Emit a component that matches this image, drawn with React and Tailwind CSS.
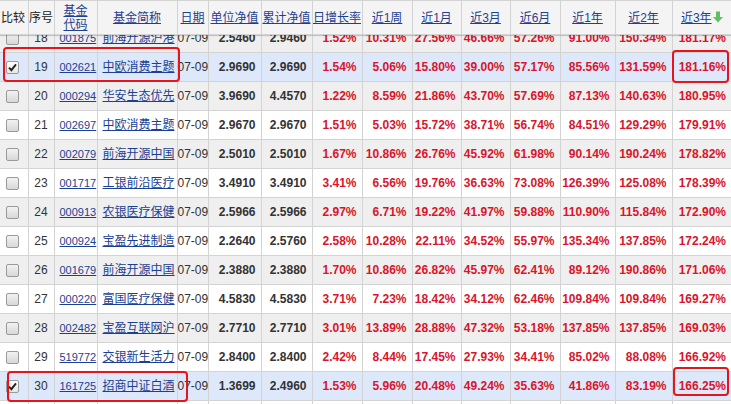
import React from "react";

const rows = [
  ["18", "001875", "前海开源沪港", "2.5460", "2.9460", "1.52%", "10.31%", "27.56%", "46.66%", "57.26%", "91.00%", "150.34%", "181.17%"],
  ["19", "002621", "中欧消费主题", "2.9690", "2.9690", "1.54%", "5.06%", "15.80%", "39.00%", "57.17%", "85.56%", "131.59%", "181.16%"],
  ["20", "000294", "华安生态优先", "3.9690", "4.4570", "1.22%", "8.59%", "21.86%", "43.70%", "57.69%", "87.13%", "140.63%", "180.95%"],
  ["21", "002697", "中欧消费主题", "2.9670", "2.9670", "1.51%", "5.03%", "15.72%", "38.71%", "56.74%", "84.51%", "129.29%", "179.91%"],
  ["22", "002079", "前海开源中国", "2.5010", "2.5010", "1.67%", "10.86%", "26.76%", "45.92%", "61.98%", "90.14%", "190.24%", "178.82%"],
  ["23", "001717", "工银前沿医疗", "3.4910", "3.4910", "3.41%", "6.56%", "19.76%", "36.63%", "73.08%", "126.39%", "125.08%", "178.39%"],
  ["24", "000913", "农银医疗保健", "2.5966", "2.5966", "2.97%", "6.71%", "19.22%", "41.97%", "59.88%", "110.90%", "115.84%", "172.90%"],
  ["25", "000924", "宝盈先进制造", "2.2640", "2.5760", "2.58%", "10.28%", "22.11%", "34.52%", "55.97%", "135.34%", "137.85%", "172.24%"],
  ["26", "001679", "前海开源中国", "2.3880", "2.3880", "1.70%", "10.86%", "26.82%", "45.97%", "62.41%", "89.12%", "190.86%", "171.06%"],
  ["27", "000220", "富国医疗保健", "4.5830", "4.5830", "3.71%", "7.23%", "18.42%", "34.12%", "62.46%", "109.84%", "109.84%", "169.27%"],
  ["28", "002482", "宝盈互联网沪", "2.7710", "2.7710", "3.01%", "13.89%", "28.88%", "47.32%", "53.18%", "137.85%", "137.85%", "169.03%"],
  ["29", "519772", "交银新生活力", "2.8400", "2.8400", "2.42%", "8.44%", "17.45%", "27.93%", "34.41%", "85.02%", "88.08%", "166.92%"],
  ["30", "161725", "招商中证白酒", "1.3699", "2.4960", "1.53%", "5.96%", "20.48%", "49.24%", "35.63%", "41.86%", "83.19%", "166.25%"],
  ["31", "", "", "", "", "", "", "", "", "", "", "", ""],
];

const widths = [28, 26, 43, 80, 31, 53, 51, 50, 50, 49, 49, 50, 55, 57, 59];

function Cols() {
  return (
    <colgroup>
      {widths.map((w, i) => (
        <col key={i} style={{ width: w }} />
      ))}
    </colgroup>
  );
}

function Checkbox({ checked }) {
  return (
    <div
      className={
        "w-[13px] h-[13px] rounded-[2px] border border-[#9a9a9a] flex items-center justify-center " +
        (checked ? "bg-gradient-to-b from-[#fdfdfd] to-[#e6e6e6]" : "bg-gradient-to-b from-[#f2f2f2] to-[#d8d8d8]")
      }
    >
      {checked && (
        <svg width="9" height="9" viewBox="0 0 9 9">
          <path d="M1 4.6 L3.4 7.2 L8 1.4" fill="none" stroke="#222" strokeWidth="1.9" />
        </svg>
      )}
    </div>
  );
}

function DownArrow() {
  return (
    <svg width="10" height="12" viewBox="0 0 10 12" className="inline-block ml-[1px] -mt-[3px] align-middle">
      <rect x="3" y="0.5" width="4" height="6" fill="#5fc05f" />
      <path d="M0 6 L10 6 L5 11.5 Z" fill="#5fc05f" />
    </svg>
  );
}

const hdLink = "text-[#1f3f91] underline";

export default function App() {
  const cell = "border border-[#d3d3d3] p-0";
  return (
    <div
      className="relative w-[731px] h-[404px] overflow-hidden bg-white text-[12px] leading-none"
      style={{ fontFamily: "Arial, 'Liberation Sans', 'Noto Sans CJK SC', sans-serif" }}
    >
      <table className="table-fixed border-collapse w-[731px] bg-[#f4f4f4] shadow-[0_1px_1px_rgba(0,0,0,0.18)] relative z-10">
        <Cols />
        <thead>
          <tr className="h-[34px]">
            <th className={cell + " font-normal text-[#222] text-left pl-[1px] border-l-0"}>比较</th>
            <th className={cell + " font-normal text-[#222]"}>序号</th>
            <th className={cell + " font-normal"}>
              <span className={hdLink + " inline-block leading-[14px]"}>
                基金
                <br />
                代码
              </span>
            </th>
            <th className={cell + " font-normal"}>
              <span className={hdLink}>基金简称</span>
            </th>
            <th className={cell + " font-normal"}>
              <span className={hdLink}>日期</span>
            </th>
            <th className={cell + " font-normal"}>
              <span className={hdLink}>单位净值</span>
            </th>
            <th className={cell + " font-normal"}>
              <span className={hdLink}>累计净值</span>
            </th>
            <th className={cell + " font-normal"}>
              <span className={hdLink}>日增长率</span>
            </th>
            <th className={cell + " font-normal"}>
              <span className={hdLink}>近1周</span>
            </th>
            <th className={cell + " font-normal"}>
              <span className={hdLink}>近1月</span>
            </th>
            <th className={cell + " font-normal"}>
              <span className={hdLink}>近3月</span>
            </th>
            <th className={cell + " font-normal"}>
              <span className={hdLink}>近6月</span>
            </th>
            <th className={cell + " font-normal"}>
              <span className={hdLink}>近1年</span>
            </th>
            <th className={cell + " font-normal"}>
              <span className={hdLink}>近2年</span>
            </th>
            <th className={cell + " font-normal border-r-0 whitespace-nowrap"}>
              <span className={hdLink}>近3年</span>
              <DownArrow />
            </th>
          </tr>
        </thead>
      </table>
      <div className="h-[370px] overflow-hidden">
        <table className="table-fixed border-collapse w-[731px] -mt-[12px]">
          <Cols />
          <tbody>
            {rows.map((r) => {
              const n = parseInt(r[0], 10);
              const selected = n === 19 || n === 30;
              const bg = selected ? "bg-[#dde8fb]" : n % 2 === 0 ? "bg-[#efefef]" : "bg-white";
              const empty = r[1] === "";
              return (
                <tr key={r[0]} className={"h-[29px] " + bg}>
                  <td className={cell + " border-l-0"}>
                    {!empty && (
                      <div className="pl-[6px]">
                        <Checkbox checked={selected} />
                      </div>
                    )}
                  </td>
                  <td className={cell + " text-center text-[#333]"}>{empty ? "" : r[0]}</td>
                  <td className={cell + " pl-[5px] text-[11px]"}>
                    <span className="text-[#1a3f93] underline">{r[1]}</span>
                  </td>
                  <td className={cell + " pl-[5px] whitespace-nowrap overflow-hidden"}>
                    <span className="text-[#1a3f93] underline">{r[2]}</span>
                  </td>
                  <td className={cell + " text-[#333] whitespace-nowrap"}>{empty ? "" : "07-09"}</td>
                  <td className={cell + " text-right pr-[5px] font-bold text-[#333]"}>{r[3]}</td>
                  <td className={cell + " text-right pr-[5px] font-bold text-[#333]"}>{r[4]}</td>
                  {r.slice(5).map((v, i) => (
                    <td
                      key={i}
                      className={cell + " text-right pr-[5px] font-bold text-[#d9142b] " + (i === 7 ? "border-r-0" : "")}
                    >
                      {v}
                    </td>
                  ))}
                </tr>
              );
            })}
          </tbody>
        </table>
      </div>

      <div className="absolute left-[3px] top-[47px] w-[177px] h-[35px] border-2 border-[#e8141c] rounded-[4px] z-20" />
      <div className="absolute left-[672px] top-[50px] w-[57px] h-[33px] border-2 border-[#e8141c] rounded-[4px] z-20" />
      <div className="absolute left-[7px] top-[371px] w-[181px] h-[31px] border-2 border-[#e8141c] rounded-[4px] z-20" />
      <div className="absolute left-[673px] top-[367px] w-[56px] h-[29px] border-2 border-[#e8141c] rounded-[4px] z-20" />
    </div>
  );
}
